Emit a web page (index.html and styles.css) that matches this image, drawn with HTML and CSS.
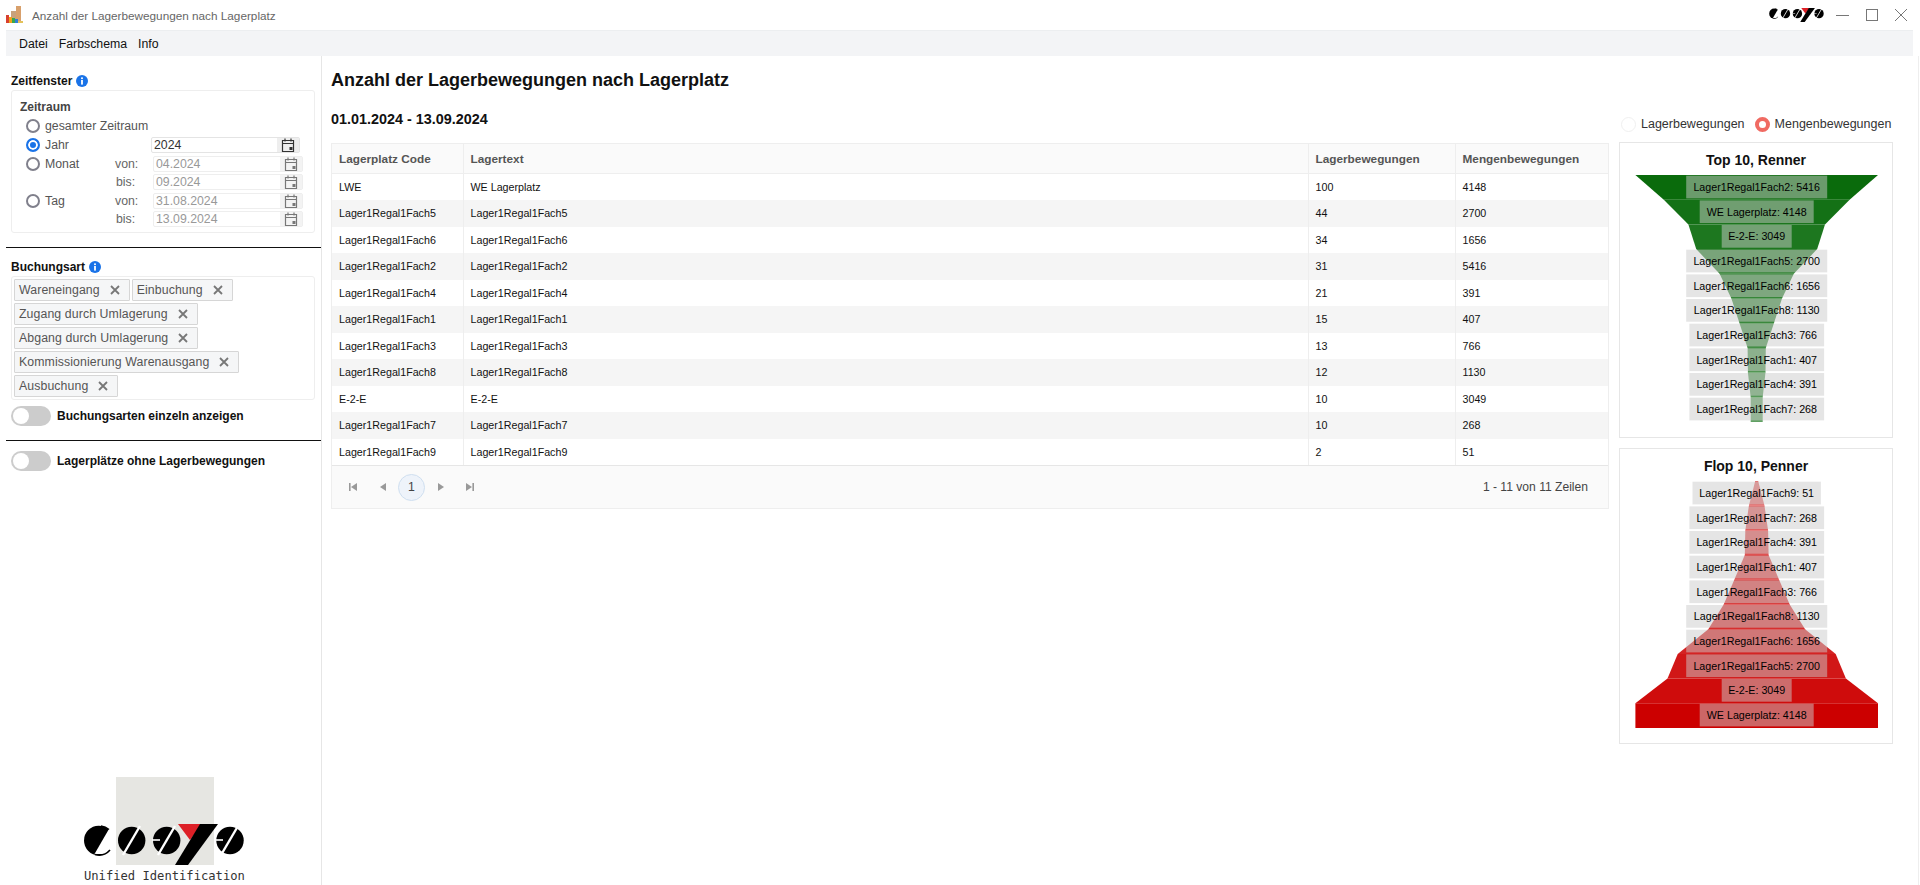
FILE: index.html
```html
<!DOCTYPE html>
<html lang="de">
<head>
    <meta charset="UTF-8">
    <title>Anzahl der Lagerbewegungen nach Lagerplatz</title>
    <link rel="stylesheet" href="styles.css">
</head>
<body>
    <svg class="defs" width="0" height="0">
        <symbol id="cosys" viewBox="0 0 160 41">
            <circle cx="14.7" cy="16.5" r="14.7" fill="#000"/>
            <polygon points="31,1.5 27,1.5 10.5,30 31,30" fill="#fff"/>
            <path d="M17 2 A14.7 14.7 0 0 1 25 5.5 M11 30.5 A14.7 14.7 0 0 0 26 26" fill="none" stroke="#000" stroke-width="1.6"/>
            <circle cx="47.7" cy="16.5" r="13.7" fill="#000"/>
            <line x1="39" y1="31" x2="56" y2="2" stroke="#fff" stroke-width="2.4"/>
            <circle cx="82.7" cy="16.5" r="13.7" fill="#000"/>
            <line x1="74" y1="31" x2="91" y2="2" stroke="#fff" stroke-width="2.4"/>
            <line x1="68" y1="16" x2="76" y2="16" stroke="#fff" stroke-width="1.6"/>
            <polygon points="94,0 118,0 106,16" fill="#dd2027"/>
            <polygon points="116,0 134,0 104,41 91,41" fill="#000"/>
            <circle cx="146" cy="16.5" r="13.7" fill="#000"/>
            <line x1="137" y1="31" x2="154" y2="2" stroke="#fff" stroke-width="2.4"/>
            <line x1="131" y1="16" x2="139" y2="16" stroke="#fff" stroke-width="1.6"/>
        </symbol>
        <symbol id="cal" viewBox="0 0 16 16">
            <path d="M2.5 3.5h11v11h-11z M2.5 6.5h11 M5 1.5v3 M11 1.5v3" fill="none" stroke="currentColor" stroke-width="1.2"/>
            <rect x="9.5" y="10" width="3" height="3" fill="currentColor"/>
        </symbol>
        <symbol id="info" viewBox="0 0 12 12">
            <circle cx="6" cy="6" r="6" fill="#1a73e8"/>
            <rect x="5.1" y="5" width="1.8" height="4.6" fill="#fff"/>
            <rect x="5.1" y="2.4" width="1.8" height="1.7" fill="#fff"/>
        </symbol>
        <symbol id="x" viewBox="0 0 10 10">
            <path d="M1 1l8 8M9 1l-8 8" stroke="#777" stroke-width="1.8" fill="none"/>
        </symbol>
    </svg>

    <header class="titlebar">
        <svg class="app-icon" viewBox="0 0 18 18" width="18" height="18">
            <rect x="5" y="5" width="5" height="10" fill="#c9a27c"/>
            <rect x="10" y="0" width="5" height="15" fill="#d8a06c"/>
            <rect x="0" y="9" width="3" height="8" fill="#d8402f"/>
            <rect x="3" y="11" width="3" height="6" fill="#f2a31b"/>
            <rect x="6" y="12" width="3" height="5" fill="#3aa84a"/>
            <rect x="9" y="13" width="3" height="4" fill="#2f7fd6"/>
            <rect x="12" y="15" width="5" height="2" fill="#e3c25a"/>
        </svg>
        <span class="app-title">Anzahl der Lagerbewegungen nach Lagerplatz</span>
        <svg class="brand-small" width="55" height="14"><use href="#cosys"/></svg>
        <div class="window-buttons">
            <svg width="14" height="14" viewBox="0 0 14 14"><line x1="0" y1="7.5" x2="13" y2="7.5" stroke="#777"/></svg>
            <svg width="14" height="14" viewBox="0 0 14 14"><rect x="1.5" y="1.5" width="11" height="11" fill="none" stroke="#777"/></svg>
            <svg width="14" height="14" viewBox="0 0 14 14"><path d="M1 1l12 12M13 1L1 13" stroke="#777" fill="none"/></svg>
        </div>
    </header>

    <nav class="menubar">
        <span>Datei</span>
        <span>Farbschema</span>
        <span>Info</span>
    </nav>

    <main class="main">
        <aside class="sidebar">
            <div class="section-title">Zeitfenster <svg class="info" width="12" height="12"><use href="#info"/></svg></div>
            <div class="panel time-panel">
                <div class="panel-title">Zeitraum</div>
                <div class="time-grid">
                    <label class="radio-row"><span class="radio"></span>gesamter Zeitraum</label>
                    <span></span>
                    <span></span>

                    <label class="radio-row"><span class="radio checked"></span>Jahr</label>
                    <span></span>
                    <div class="date-input year"><span class="date-value">2024</span><span class="date-btn"><svg width="16" height="16"><use href="#cal"/></svg></span></div>

                    <label class="radio-row"><span class="radio"></span>Monat</label>
                    <span class="range-label">von:</span>
                    <div class="date-input disabled"><span class="date-value">04.2024</span><span class="date-btn"><svg width="16" height="16"><use href="#cal"/></svg></span></div>

                    <span></span>
                    <span class="range-label bis">bis:</span>
                    <div class="date-input disabled"><span class="date-value">09.2024</span><span class="date-btn"><svg width="16" height="16"><use href="#cal"/></svg></span></div>

                    <label class="radio-row"><span class="radio"></span>Tag</label>
                    <span class="range-label">von:</span>
                    <div class="date-input disabled"><span class="date-value">31.08.2024</span><span class="date-btn"><svg width="16" height="16"><use href="#cal"/></svg></span></div>

                    <span></span>
                    <span class="range-label bis">bis:</span>
                    <div class="date-input disabled"><span class="date-value">13.09.2024</span><span class="date-btn"><svg width="16" height="16"><use href="#cal"/></svg></span></div>
                </div>
            </div>

            <hr class="divider">

            <div class="section-title">Buchungsart <svg class="info" width="12" height="12"><use href="#info"/></svg></div>
            <div class="panel chips">
                <span class="chip">Wareneingang<svg width="10" height="10"><use href="#x"/></svg></span>
                <span class="chip">Einbuchung<svg width="10" height="10"><use href="#x"/></svg></span>
                <span class="chip">Zugang durch Umlagerung<svg width="10" height="10"><use href="#x"/></svg></span>
                <span class="chip">Abgang durch Umlagerung<svg width="10" height="10"><use href="#x"/></svg></span>
                <span class="chip">Kommissionierung Warenausgang<svg width="10" height="10"><use href="#x"/></svg></span>
                <span class="chip">Ausbuchung<svg width="10" height="10"><use href="#x"/></svg></span>
            </div>
            <div class="toggle-row first"><span class="toggle"></span>Buchungsarten einzeln anzeigen</div>

            <hr class="divider second">

            <div class="toggle-row"><span class="toggle"></span>Lagerplätze ohne Lagerbewegungen</div>

            <div class="logo">
                <svg width="160" height="88" viewBox="0 0 160 88">
                    <rect x="32" y="0" width="98" height="88" fill="#e6e6e2"/>
                    <use href="#cosys" x="0" y="47" width="160" height="41"/>
                </svg>
                <div class="logo-text">Unified Identification</div>
            </div>
        </aside>

        <section class="content">
            <h1>Anzahl der Lagerbewegungen nach Lagerplatz</h1>
            <div class="content-row">
                <div class="left-col">
                    <div class="date-range">01.01.2024 - 13.09.2024</div>
                    <div class="table-box">
                        <table class="data-table">
                            <colgroup>
                                <col class="col-code">
                                <col class="col-text">
                                <col class="col-moves">
                                <col class="col-qty">
                            </colgroup>
                            <thead>
                                <tr><th>Lagerplatz Code</th><th>Lagertext</th><th>Lagerbewegungen</th><th>Mengenbewegungen</th></tr>
                            </thead>
                            <tbody>
                                <tr><td>LWE</td><td>WE Lagerplatz</td><td>100</td><td>4148</td></tr>
                                <tr><td>Lager1Regal1Fach5</td><td>Lager1Regal1Fach5</td><td>44</td><td>2700</td></tr>
                                <tr><td>Lager1Regal1Fach6</td><td>Lager1Regal1Fach6</td><td>34</td><td>1656</td></tr>
                                <tr><td>Lager1Regal1Fach2</td><td>Lager1Regal1Fach2</td><td>31</td><td>5416</td></tr>
                                <tr><td>Lager1Regal1Fach4</td><td>Lager1Regal1Fach4</td><td>21</td><td>391</td></tr>
                                <tr><td>Lager1Regal1Fach1</td><td>Lager1Regal1Fach1</td><td>15</td><td>407</td></tr>
                                <tr><td>Lager1Regal1Fach3</td><td>Lager1Regal1Fach3</td><td>13</td><td>766</td></tr>
                                <tr><td>Lager1Regal1Fach8</td><td>Lager1Regal1Fach8</td><td>12</td><td>1130</td></tr>
                                <tr><td>E-2-E</td><td>E-2-E</td><td>10</td><td>3049</td></tr>
                                <tr><td>Lager1Regal1Fach7</td><td>Lager1Regal1Fach7</td><td>10</td><td>268</td></tr>
                                <tr><td>Lager1Regal1Fach9</td><td>Lager1Regal1Fach9</td><td>2</td><td>51</td></tr>
                            </tbody>
                        </table>
                        <div class="pager">
                            <div class="pager-buttons">
                                <svg class="pg first-pg" width="10" height="10" viewBox="0 0 10 10"><path d="M1 1h1.6v8H1z M9 1v8L3 5z" fill="#999"/></svg>
                                <svg class="pg prev-pg" width="8" height="10" viewBox="0 0 8 10"><path d="M7 1v8L1 5z" fill="#999"/></svg>
                                <span class="page-num">1</span>
                                <svg class="pg next-pg" width="8" height="10" viewBox="0 0 8 10"><path d="M1 1v8l6-4z" fill="#999"/></svg>
                                <svg class="pg last-pg" width="10" height="10" viewBox="0 0 10 10"><path d="M1 1v8l6-4z M7.4 1H9v8H7.4z" fill="#999"/></svg>
                            </div>
                            <span class="pager-info">1 - 11 von 11 Zeilen</span>
                        </div>
                    </div>
                </div>

                <div class="right-col">
                    <div class="legend">
                        <span class="legend-item"><span class="legend-dot"></span>Lagerbewegungen</span>
                        <span class="legend-item"><span class="legend-dot on"></span>Mengenbewegungen</span>
                    </div>

                    <div class="chart-card">
                        <div class="chart-title">Top 10, Renner</div>
                        <svg class="funnel" width="272" height="250" viewBox="0 0 272 250">
                            <polygon fill="#0a6b0c" points="15.4,0 258,0 229.6,24.7 43.8,24.7"/>
                            <polygon fill="#147116" points="43.8,24.7 229.6,24.7 205,49.4 68.4,49.4"/>
                            <polygon fill="#1d771f" points="68.4,49.4 205,49.4 197.2,74.1 76.2,74.1"/>
                            <polygon fill="#277d29" points="76.2,74.1 197.2,74.1 173.8,98.8 99.6,98.8"/>
                            <polygon fill="#308332" points="99.6,98.8 173.8,98.8 162,123.5 111.4,123.5"/>
                            <polygon fill="#3a883c" points="111.4,123.5 162,123.5 153.9,148.2 119.5,148.2"/>
                            <polygon fill="#438e45" points="119.5,148.2 153.9,148.2 145.8,172.9 127.6,172.9"/>
                            <polygon fill="#4d944f" points="127.6,172.9 145.8,172.9 145.5,197.6 127.9,197.6"/>
                            <polygon fill="#569a58" points="127.9,197.6 145.5,197.6 142.7,222.3 130.7,222.3"/>
                            <polygon fill="#60a062" points="130.7,222.3 142.7,222.3 142.7,247 130.7,247"/>
                            <g class="labels">
                                <rect x="66.2" y="0.7" width="141" height="22.7"/>
                                <rect x="79.7" y="25.4" width="114" height="22.7"/>
                                <rect x="101.7" y="50" width="70" height="22.7"/>
                                <rect x="66.2" y="74.7" width="141" height="22.7"/>
                                <rect x="66.2" y="99.4" width="141" height="22.7"/>
                                <rect x="66.2" y="124" width="141" height="22.7"/>
                                <rect x="69.4" y="148.7" width="134.7" height="22.7"/>
                                <rect x="69.4" y="173.4" width="134.7" height="22.7"/>
                                <rect x="69.4" y="198" width="134.7" height="22.7"/>
                                <rect x="69.4" y="222.7" width="134.7" height="22.7"/>
                            </g>
                            <g class="label-text">
                                <text x="136.7" y="16">Lager1Regal1Fach2: 5416</text>
                                <text x="136.7" y="40.7">WE Lagerplatz: 4148</text>
                                <text x="136.7" y="65.4">E-2-E: 3049</text>
                                <text x="136.7" y="90">Lager1Regal1Fach5: 2700</text>
                                <text x="136.7" y="114.7">Lager1Regal1Fach6: 1656</text>
                                <text x="136.7" y="139.4">Lager1Regal1Fach8: 1130</text>
                                <text x="136.7" y="164">Lager1Regal1Fach3: 766</text>
                                <text x="136.7" y="188.7">Lager1Regal1Fach1: 407</text>
                                <text x="136.7" y="213.4">Lager1Regal1Fach4: 391</text>
                                <text x="136.7" y="238">Lager1Regal1Fach7: 268</text>
                            </g>
                        </svg>
                    </div>

                    <div class="chart-card">
                        <div class="chart-title">Flop 10, Penner</div>
                        <svg class="funnel" width="272" height="250" viewBox="0 0 272 250">
                            <polygon fill="#e46868" points="135.2,0 138.2,0 144.5,24.7 128.9,24.7"/>
                            <polygon fill="#e15c5c" points="128.9,24.7 144.5,24.7 148.1,49.4 125.3,49.4"/>
                            <polygon fill="#df5151" points="125.3,49.4 148.1,49.4 148.6,74.1 124.8,74.1"/>
                            <polygon fill="#dc4545" points="124.8,74.1 148.6,74.1 159.1,98.8 114.3,98.8"/>
                            <polygon fill="#d93a3a" points="114.3,98.8 159.1,98.8 169.7,123.5 103.7,123.5"/>
                            <polygon fill="#d72e2e" points="103.7,123.5 169.7,123.5 185.1,148.2 88.3,148.2"/>
                            <polygon fill="#d42323" points="88.3,148.2 185.1,148.2 215.7,172.9 57.7,172.9"/>
                            <polygon fill="#d11717" points="57.7,172.9 215.7,172.9 225.9,197.6 47.5,197.6"/>
                            <polygon fill="#cf0c0c" points="47.5,197.6 225.9,197.6 258,222.3 15.4,222.3"/>
                            <polygon fill="#cc0000" points="15.4,222.3 258,222.3 258,247 15.4,247"/>
                            <g class="labels">
                                <rect x="72.5" y="0.7" width="128.4" height="22.7"/>
                                <rect x="69.4" y="25.4" width="134.7" height="22.7"/>
                                <rect x="69.4" y="50" width="134.7" height="22.7"/>
                                <rect x="69.4" y="74.7" width="134.7" height="22.7"/>
                                <rect x="69.4" y="99.4" width="134.7" height="22.7"/>
                                <rect x="66.2" y="124" width="141" height="22.7"/>
                                <rect x="66.2" y="148.7" width="141" height="22.7"/>
                                <rect x="66.2" y="173.4" width="141" height="22.7"/>
                                <rect x="101.7" y="198" width="70" height="22.7"/>
                                <rect x="79.7" y="222.7" width="114" height="22.7"/>
                            </g>
                            <g class="label-text">
                                <text x="136.7" y="16">Lager1Regal1Fach9: 51</text>
                                <text x="136.7" y="40.7">Lager1Regal1Fach7: 268</text>
                                <text x="136.7" y="65.4">Lager1Regal1Fach4: 391</text>
                                <text x="136.7" y="90">Lager1Regal1Fach1: 407</text>
                                <text x="136.7" y="114.7">Lager1Regal1Fach3: 766</text>
                                <text x="136.7" y="139.4">Lager1Regal1Fach8: 1130</text>
                                <text x="136.7" y="164">Lager1Regal1Fach6: 1656</text>
                                <text x="136.7" y="188.7">Lager1Regal1Fach5: 2700</text>
                                <text x="136.7" y="213.4">E-2-E: 3049</text>
                                <text x="136.7" y="238">WE Lagerplatz: 4148</text>
                            </g>
                        </svg>
                    </div>
                </div>
            </div>
        </section>
    </main>
</body>
</html>
```

FILE: styles.css
```css
* {
    margin: 0;
    padding: 0;
    box-sizing: border-box;
    font-family: "Liberation Sans", Arial, sans-serif;
}

body {
    background: #fff;
    height: 100vh;
    display: flex;
    flex-direction: column;
    overflow: hidden;
    font-size: 12.3px;
    color: #555;
}

.defs {
    position: absolute;
}

/* window chrome */
.titlebar {
    height: 30px;
    display: flex;
    align-items: center;
    padding-left: 6px;
    flex-shrink: 0;
}

.app-title {
    margin-left: 8px;
    color: #666;
    font-size: 11.75px;
}

.brand-small {
    margin-left: auto;
    margin-right: 12px;
}

.window-buttons {
    display: flex;
    gap: 15px;
    margin-right: 12px;
}

.menubar {
    height: 26px;
    margin: 0 7px 0 6px;
    background: #f3f4f6;
    border-top: 1px solid #eceef0;
    display: flex;
    align-items: center;
    gap: 11px;
    padding-left: 13px;
    color: #111;
    flex-shrink: 0;
}

.main {
    flex: 1;
    display: flex;
    min-height: 0;
    margin-left: 6px;
    border-right: 1px solid #eee;
    margin-right: 1px;
}

/* sidebar */
.sidebar {
    width: 316px;
    flex-shrink: 0;
    border-right: 1px solid #e6e6e6;
    padding: 18px 6px 2px 5px;
    display: flex;
    flex-direction: column;
}

.section-title {
    font-size: 12px;
    font-weight: bold;
    color: #111;
    line-height: 14px;
    display: flex;
    align-items: center;
    gap: 4px;
}

.panel {
    margin-top: 2px;
    border: 1px solid #eee;
    border-radius: 3px;
}

.time-panel {
    height: 143px;
    padding: 8px 0 0 8px;
}

.panel-title {
    font-weight: bold;
    color: #444;
    font-size: 12px;
    line-height: 17px;
}

.time-grid {
    display: grid;
    grid-template-columns: 89px 36px 152px;
    grid-template-rows: 19px 20px 18px 18px 19px 18px;
    padding-left: 6px;
    align-items: center;
}

.radio-row {
    display: flex;
    align-items: center;
    gap: 5px;
    white-space: nowrap;
}

.radio {
    width: 14px;
    height: 14px;
    border: 2px solid #80808c;
    border-radius: 50%;
    background: #fff;
    flex-shrink: 0;
}

.radio.checked {
    border-color: #1a73e8;
    background: #1a73e8;
    box-shadow: inset 0 0 0 2px #fff;
}

.range-label {
    color: #666;
}

.range-label.bis {
    padding-left: 1px;
}

.date-input {
    height: 16px;
    display: flex;
    align-items: center;
    justify-content: space-between;
    border: 1px solid #e4e4e4;
    border-radius: 2px;
    color: #333;
    margin-right: 3px;
}

.date-input.disabled {
    color: #999;
    margin: 0 0 0 2px;
    border-color: #eee;
}

.date-value {
    padding-left: 2px;
}

.date-btn {
    width: 22px;
    height: 100%;
    background: #eee;
    color: #333;
    display: flex;
    align-items: center;
    justify-content: center;
}

.date-input.disabled .date-btn {
    background: #f3f3f3;
    color: #777;
}

.divider {
    border: none;
    border-top: 1.5px solid #111;
    margin: 14px -6px 12px -5px;
}

.divider.second {
    margin-top: 14px;
    margin-bottom: 9.5px;
}

.chips {
    height: 124px;
    padding: 2px 2px 0 2px;
    display: flex;
    flex-wrap: wrap;
    align-content: flex-start;
    column-gap: 2px;
    row-gap: 2.5px;
}

.chip {
    height: 21.5px;
    display: inline-flex;
    align-items: center;
    gap: 10px;
    padding: 0 9px 0 4px;
    background: #f5f6f7;
    border: 1px solid #d6d6d6;
    border-radius: 1px;
    color: #555;
    letter-spacing: 0.1px;
}

.toggle-row {
    display: flex;
    align-items: center;
    gap: 6px;
    font-size: 12px;
    font-weight: bold;
    color: #111;
    height: 20px;
}

.toggle-row.first {
    margin-top: 6px;
}

.toggle {
    width: 40px;
    height: 20px;
    background: #ccc;
    border-radius: 10px;
    position: relative;
    flex-shrink: 0;
}

.toggle::after {
    content: "";
    position: absolute;
    left: 2px;
    top: 2px;
    width: 16px;
    height: 16px;
    border-radius: 50%;
    background: #fff;
}

.logo {
    margin-top: auto;
    margin-left: 73px;
    width: 160px;
    line-height: 0;
}

.logo-text {
    font-family: "DejaVu Sans Mono", monospace;
    font-size: 12.15px;
    line-height: 14px;
    color: #333;
    margin-top: 4px;
    white-space: nowrap;
}

/* content */
.content {
    flex: 1;
    min-width: 0;
    padding: 0 25px 0 9px;
}

h1 {
    font-size: 18px;
    font-weight: bold;
    color: #111;
    line-height: 22px;
    margin-top: 13px;
}

.content-row {
    display: flex;
    gap: 10px;
    margin-top: 10px;
}

.left-col {
    flex: 1;
    min-width: 0;
}

.date-range {
    font-size: 14.4px;
    font-weight: bold;
    color: #111;
    line-height: 16px;
    margin-top: 10px;
}

.table-box {
    margin-top: 16px;
    border: 1px solid #eee;
}

.data-table {
    width: 100%;
    border-collapse: collapse;
    table-layout: fixed;
}

.col-code { width: 131px; }
.col-moves { width: 147px; }
.col-qty { width: 153px; }

.data-table th {
    height: 29.5px;
    text-align: left;
    font-size: 11.8px;
    color: #555;
    background: #fafafa;
    padding: 0 7px;
    border-right: 1px solid #eee;
    border-bottom: 1px solid #eee;
}

.data-table td {
    height: 26.5px;
    font-size: 10.7px;
    color: #111;
    padding: 0 7px;
    border-right: 1px solid #eee;
}

.data-table th:last-child,
.data-table td:last-child {
    border-right: none;
}

.data-table tbody tr:nth-child(even) {
    background: #f5f5f5;
}

.pager {
    height: 43px;
    background: #fafafa;
    border-top: 1px solid #e6e6e6;
    display: flex;
    align-items: center;
    justify-content: space-between;
    padding: 0 20px 0 16px;
}

.pager-buttons {
    display: flex;
    align-items: center;
}

.prev-pg {
    margin-left: 21px;
    margin-right: 11px;
}

.next-pg {
    margin-left: 12px;
}

.last-pg {
    margin-left: 20px;
}

.page-num {
    width: 27px;
    height: 27px;
    border: 1px solid #cfdff0;
    border-radius: 50%;
    background: #eef3fa;
    display: flex;
    align-items: center;
    justify-content: center;
    color: #444;
}

.pager-info {
    color: #444;
    font-size: 12.1px;
}

.right-col {
    width: 274px;
    flex-shrink: 0;
    display: flex;
    flex-direction: column;
}

.legend {
    height: 20px;
    margin: 13px -4px 0 2px;
    display: flex;
    align-items: center;
    gap: 10px;
    color: #333;
    font-size: 12.5px;
}

.legend-item {
    display: flex;
    align-items: center;
    gap: 5px;
}

.legend-dot {
    width: 15px;
    height: 15px;
    border-radius: 50%;
    border: 1px solid #f0f0f0;
    background: #fff;
}

.legend-dot.on {
    border: 4px solid #f06a62;
}

.chart-card {
    height: 296px;
    margin-top: 10px;
    border: 1px solid #e6e6e6;
}

.legend + .chart-card {
    margin-top: 8px;
}

.chart-title {
    height: 32px;
    font-size: 14px;
    font-weight: bold;
    color: #111;
    text-align: center;
    padding-top: 9px;
    line-height: 16px;
}

.funnel {
    display: block;
}

.labels rect {
    fill: rgba(204, 204, 204, 0.5);
}

.label-text text {
    font-size: 10.7px;
    fill: #000;
    text-anchor: middle;
}
```
